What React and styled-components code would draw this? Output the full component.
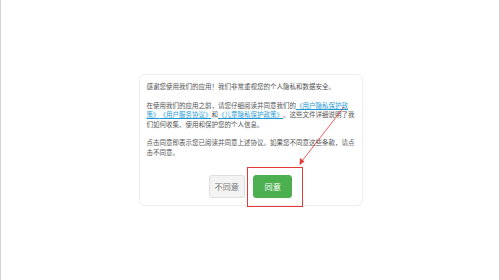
import React from "react";
import styled, { createGlobalStyle } from "styled-components";

const GlobalStyle = createGlobalStyle`
  html, body {
    margin: 0;
    padding: 0;
    background: #ffffff;
  }
  body {
    font-family: "Noto Sans CJK SC", "Noto Sans", sans-serif;
  }
`;

const Page = styled.div`
  box-sizing: border-box;
  width: 500px;
  height: 280px;
  border-left: 1px solid #d4d4d4;
  border-right: 1px solid #d4d4d4;
  display: flex;
  align-items: center;
  justify-content: center;
  padding-left: 1px;
`;

const Card = styled.div`
  position: relative;
  box-sizing: border-box;
  width: 224px;
  padding: 7px 7px 7px;
  background: #fff;
  border: 1px solid #efefef;
  border-radius: 6px;
  box-shadow: 0 0 2px rgba(0, 0, 0, 0.03);
`;

const Paragraph = styled.p`
  margin: 0 0 9.4px;
  font-size: 6.5px;
  line-height: 9.3px;
  color: #555;
  text-spacing-trim: space-all;
  &:last-of-type {
    margin-bottom: 0;
  }
`;

const Link = styled.a`
  color: #1f9ad6;
  text-decoration: underline;
  cursor: pointer;
`;

const ButtonRow = styled.div`
  display: flex;
  justify-content: center;
  gap: 8.5px;
  margin-top: 17.5px;
`;

const Button = styled.button`
  box-sizing: border-box;
  height: 23px;
  padding: 0;
  width: ${(p) => (p.$primary ? "39px" : "36px")};
  font-family: inherit;
  font-size: 8.2px;
  border-radius: 3px;
  cursor: pointer;
  border: 1px solid ${(p) => (p.$primary ? "#4caf50" : "#dedede")};
  background: ${(p) => (p.$primary ? "#4caf50" : "#f3f3f3")};
  color: ${(p) => (p.$primary ? "#ffffff" : "#777")};
`;

const Highlight = styled.div`
  position: absolute;
  left: 107px;
  top: 92px;
  width: 56px;
  height: 40px;
  box-sizing: border-box;
  border: 1px solid #e53935;
  pointer-events: none;
`;

const Arrow = styled.svg`
  position: absolute;
  left: 0;
  top: 0;
  width: 224px;
  height: 130px;
  overflow: visible;
  pointer-events: none;
`;

export default function App() {
  return (
    <>
      <GlobalStyle />
      <Page>
        <Card>
          <Paragraph>感谢您使用我们的应用！我们非常重视您的个人隐私和数据安全。</Paragraph>
          <Paragraph>
            在使用我们的应用之前，请您仔细阅读并同意我们的<Link>《用户隐私保护政策》</Link>
            <Link>《用户服务协议》</Link>和<Link>《儿童隐私保护政策》</Link>。这些文件详细说明了我们如何收集、使用和保护您的个人信息。
          </Paragraph>
          <Paragraph>
            点击同意即表示您已阅读并同意上述协议。如果您不同意这些条款，请点击不同意。
          </Paragraph>
          <ButtonRow>
            <Button>不同意</Button>
            <Button $primary>同意</Button>
          </ButtonRow>
          <Highlight />
          <Arrow viewBox="0 0 224 130">
            <line x1="204" y1="32" x2="162" y2="86" stroke="#e53935" strokeWidth="0.8" />
            <polygon points="159.5,90 160,83 164.5,86.5" fill="#e53935" />
          </Arrow>
        </Card>
      </Page>
    </>
  );
}
